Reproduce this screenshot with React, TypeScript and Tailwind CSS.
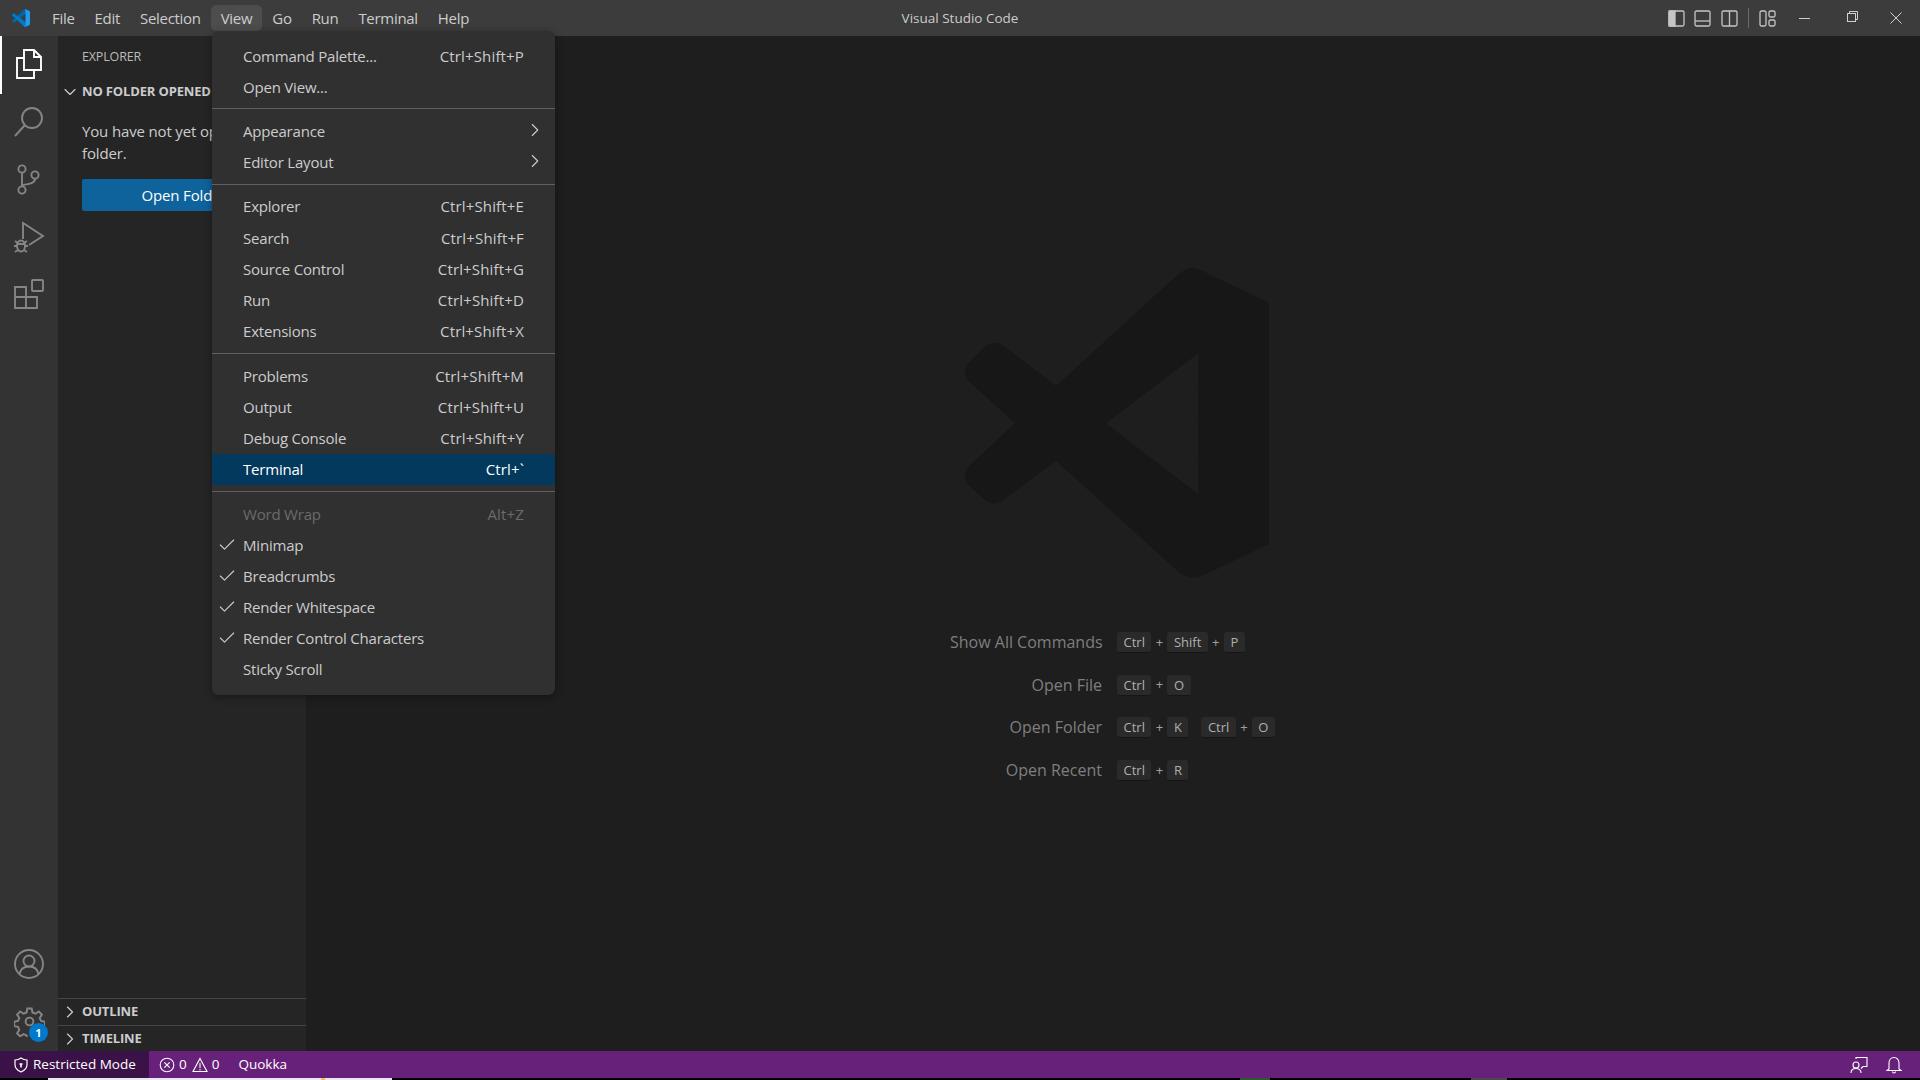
import React from 'react';
import { ChevronDown, ChevronRight, Check } from 'lucide-react';

const FONT = "font-['Open_Sans','Noto_Sans',sans-serif]";

const MENUBAR = ['File', 'Edit', 'Selection', 'View', 'Go', 'Run', 'Terminal', 'Help'];

type Item = { label: string; keys?: string; sub?: boolean; checked?: boolean; disabled?: boolean; active?: boolean };

const MENU: Item[][] = [
  [{ label: 'Command Palette...', keys: 'Ctrl+Shift+P' }, { label: 'Open View...' }],
  [{ label: 'Appearance', sub: true }, { label: 'Editor Layout', sub: true }],
  [
    { label: 'Explorer', keys: 'Ctrl+Shift+E' },
    { label: 'Search', keys: 'Ctrl+Shift+F' },
    { label: 'Source Control', keys: 'Ctrl+Shift+G' },
    { label: 'Run', keys: 'Ctrl+Shift+D' },
    { label: 'Extensions', keys: 'Ctrl+Shift+X' },
  ],
  [
    { label: 'Problems', keys: 'Ctrl+Shift+M' },
    { label: 'Output', keys: 'Ctrl+Shift+U' },
    { label: 'Debug Console', keys: 'Ctrl+Shift+Y' },
    { label: 'Terminal', keys: 'Ctrl+`', active: true },
  ],
  [
    { label: 'Word Wrap', keys: 'Alt+Z', disabled: true },
    { label: 'Minimap', checked: true },
    { label: 'Breadcrumbs', checked: true },
    { label: 'Render Whitespace', checked: true },
    { label: 'Render Control Characters', checked: true },
    { label: 'Sticky Scroll' },
  ],
];

const HINTS: { label: string; chords: string[][] }[] = [
  { label: 'Show All Commands', chords: [['Ctrl', 'Shift', 'P']] },
  { label: 'Open File', chords: [['Ctrl', 'O']] },
  { label: 'Open Folder', chords: [['Ctrl', 'K'], ['Ctrl', 'O']] },
  { label: 'Open Recent', chords: [['Ctrl', 'R']] },
];

function VsLogo() {
  return (
    <svg viewBox="0 0 100 100" className="w-[18px] h-[18px]">
      <path fill="#0065a9" d="M96.46 10.8 75.86.87a6.22 6.22 0 0 0-7.1 1.2L1.35 63.6a4.16 4.16 0 0 0 0 6.16l5.5 5a4.16 4.16 0 0 0 5.32.24L93.4 13.37c2.73-2.07 6.64-.13 6.64 3.3v-.24a6.25 6.25 0 0 0-3.54-5.63z" />
      <path fill="#007acc" d="m96.46 89.2-20.6 9.93a6.22 6.22 0 0 1-7.1-1.2L1.35 36.4a4.16 4.16 0 0 1 0-6.16l5.5-5a4.16 4.16 0 0 1 5.32-.24L93.4 86.63c2.73 2.07 6.64.13 6.64-3.3v.24a6.25 6.25 0 0 1-3.54 5.63z" />
      <path fill="#1f9cf0" d="M75.86 99.13a6.22 6.22 0 0 1-7.1-1.2c2.3 2.3 6.24.67 6.24-2.59V4.66c0-3.26-3.94-4.9-6.24-2.59a6.22 6.22 0 0 1 7.1-1.2L96.46 10.8A6.25 6.25 0 0 1 100 16.43v67.14a6.25 6.25 0 0 1-3.54 5.63z" />
    </svg>
  );
}

function Watermark() {
  return (
    <svg viewBox="9 0 1080 1080" className="w-[360px] h-[360px]">
      <path
        fill="#171717"
        fillRule="evenodd"
        d="M1017 188V912L815 1008Q785 1022 750 1000L378 662L220 780Q192 802 165 780L115 735Q94 707 115 680L255 550L115 422Q94 395 115 370L165 320Q192 298 222 318L378 438L748 100Q785 72 815 92ZM805 340L527 550L805 762Z"
      />
    </svg>
  );
}

function ActivityIcons() {
  return (
    <div className="flex flex-col items-center">
      <div className="relative w-[58px] h-[58px] flex items-center justify-center pb-[3px] pr-[1px]">
        <div className="absolute left-0 top-0 w-[2px] h-[58px] bg-white" />
        <svg width="29" height="32" viewBox="0 0 29 32" fill="none" stroke="#fff" strokeWidth="1.9">
          <path d="M10 22V2h10l7 7v13z" />
          <path d="M20 2v7h7" />
          <path d="M10 10H3v20h17v-8" />
        </svg>
      </div>
      <div className="w-[58px] h-[58px] flex items-center justify-center pb-[3px]">
        <svg width="32" height="32" viewBox="0 0 32 32" fill="none" stroke="#858585" strokeWidth="1.9">
          <circle cx="19" cy="12" r="10" />
          <path d="M12 19 2 30" />
        </svg>
      </div>
      <div className="w-[58px] h-[58px] flex items-center justify-center pb-[3px]">
        <svg width="28" height="32" viewBox="0 0 28 32" fill="none" stroke="#858585" strokeWidth="1.9">
          <circle cx="7" cy="5" r="3.6" />
          <circle cx="7" cy="26" r="3.6" />
          <circle cx="20" cy="11" r="3.6" />
          <path d="M7 9v13" />
          <path d="M20 15c0 4-5 5-13 6" />
        </svg>
      </div>
      <div className="w-[58px] h-[58px] flex items-center justify-center pb-[3px]">
        <svg width="32" height="34" viewBox="0 0 32 34" fill="none" stroke="#858585" strokeWidth="1.9">
          <path d="M10 18V2l20 13-14 9" />
          <ellipse cx="8" cy="25" rx="4" ry="5.5" fill="#333333" />
          <path d="M2 20l3 2M14 20l-3 2M1 25h3M12 25h3M2 31l3-2M14 31l-3-2M4 23h8" />
        </svg>
      </div>
      <div className="w-[58px] h-[58px] flex items-center justify-center pb-[5px]">
        <svg width="31" height="31" viewBox="0 0 31 31" fill="none" stroke="#858585" strokeWidth="1.9">
          <path d="M1 8h11v21H1zM1 18h22v11H12" />
          <rect x="18" y="1" width="11" height="11" rx="1" />
        </svg>
      </div>
    </div>
  );
}

function Kbd({ children }: { children: string }) {
  return (
    <span className="h-[21px] min-w-[21px] px-[6.5px] rounded-[3px] bg-[#2a2a2a] border-b border-[#161616] text-[13px] leading-[21px] text-[#b0b0b0] text-center">
      {children}
    </span>
  );
}

function MenuRow({ item }: { item: Item }) {
  return (
    <div className={`relative h-[31.05px] flex items-center pl-[31px] pr-[31px] justify-between ${item.active ? 'bg-[#04395e] text-white' : item.disabled ? 'text-[#6b6b6b]' : 'text-[#cccccc]'}`}>
      {item.checked && <Check size={20} strokeWidth={1.3} className="absolute left-[5px] top-[5px]" />}
      <span className="tracking-[-0.2px]">{item.label}</span>
      {item.keys && <span className="tracking-[0.15px]">{item.keys}</span>}
      {item.sub && <ChevronRight size={22} strokeWidth={1.2} className="absolute right-[9px] top-[3px]" />}
    </div>
  );
}

export default function App() {
  return (
    <div className={`w-[1920px] h-[1080px] flex flex-col overflow-hidden bg-black relative ${FONT}`}>
      {/* Title bar */}
      <div className="h-[36px] bg-[#3c3c3c] flex items-center relative shrink-0 text-[15px] text-[#cccccc]">
        <div className="w-[42px] flex justify-center"><VsLogo /></div>
        <div className="flex items-center tracking-[-0.3px]">
          {MENUBAR.map((m) => (
            <div key={m} className={`h-[26px] leading-[26px] px-[10px] rounded-[5px] ${m === 'View' ? 'bg-[#4d4d4d]' : ''}`}>{m}</div>
          ))}
        </div>
        <div className="absolute left-0 right-0 text-center text-[13.5px] pointer-events-none">Visual Studio Code</div>
        <div className="ml-auto flex items-center">
          <svg width="17" height="17" viewBox="0 0 17 17" fill="none" stroke="#c5c5c5" strokeWidth="1.3" className="mr-[9px]">
            <rect x="1" y="1" width="15" height="15" rx="1.5" />
            <rect x="1" y="1" width="6" height="15" fill="#c5c5c5" />
          </svg>
          <svg width="17" height="17" viewBox="0 0 17 17" fill="none" stroke="#c5c5c5" strokeWidth="1.3" className="mr-[10px]">
            <rect x="1" y="1" width="15" height="15" rx="1.5" />
            <path d="M1 11h15" />
          </svg>
          <svg width="17" height="17" viewBox="0 0 17 17" fill="none" stroke="#c5c5c5" strokeWidth="1.3">
            <rect x="1" y="1" width="15" height="15" rx="1.5" />
            <path d="M8.5 1v15" />
          </svg>
          <div className="w-px h-[20px] bg-[#6a6a6a] mx-[10px]" />
          <svg width="17" height="17" viewBox="0 0 17 17" fill="none" stroke="#c5c5c5" strokeWidth="1.3">
            <rect x="1" y="1" width="6" height="15" rx="1.5" />
            <rect x="10" y="1" width="6" height="6" rx="1.5" />
            <rect x="10" y="10" width="6" height="6" rx="1.5" />
          </svg>
          <div className="w-[46px] flex justify-center ml-[5px]">
            <svg width="11" height="11" viewBox="0 0 11 11" stroke="#d0d0d0" strokeWidth="1"><path d="M0 5.5h11" /></svg>
          </div>
          <div className="w-[46px] flex justify-center pl-[5px]">
            <svg width="11" height="11" viewBox="0 0 11 11" fill="none" stroke="#d0d0d0" strokeWidth="1" className="mb-[4px]">
              <rect x="0.5" y="2.5" width="8" height="8" />
              <path d="M2.5 2.5V.5h8v8h-2" />
            </svg>
          </div>
          <div className="w-[46px] flex justify-center mr-[1px]">
            <svg width="12" height="12" viewBox="0 0 12 12" stroke="#d0d0d0" strokeWidth="1"><path d="M.5.5l11 11M11.5.5l-11 11" /></svg>
          </div>
        </div>
      </div>

      {/* Main */}
      <div className="h-[1015px] flex shrink-0">
        <div className="w-[58px] bg-[#333333] flex flex-col justify-between shrink-0">
          <ActivityIcons />
          <div className="flex flex-col items-center">
            <div className="w-[58px] h-[58px] flex items-center justify-center">
              <svg width="30" height="30" viewBox="0 0 30 30" fill="none" stroke="#858585" strokeWidth="1.9">
                <circle cx="15" cy="15" r="14" />
                <circle cx="15" cy="12" r="5.5" />
                <path d="M5.5 25c1-5 5-7.5 9.5-7.5s8.500 2.500 9.500 7.500" />
              </svg>
            </div>
            <div className="relative w-[58px] h-[58px] flex items-center justify-center pb-[2px]">
              <svg width="31" height="31" viewBox="0 0 24 24" fill="none" stroke="#858585" strokeWidth="1.5">
                <circle cx="12" cy="12" r="3" />
                <path d="M10.300 2h3.400l.6 3 2.300 1 2.600-1.700 2.400 2.400-1.700 2.600 1 2.300 3 .6v3.400l-3 .6-1 2.300 1.700 2.600-2.400 2.400-2.600-1.700-2.300 1-.6 3h-3.400l-.6-3-2.300-1-2.600 1.700-2.400-2.400 1.700-2.600-1-2.300-3-.6v-3.400l3-.6 1-2.300-1.700-2.600 2.400-2.400 2.600 1.700 2.300-1z" />
              </svg>
              <div className="absolute left-[29px] top-[30px] w-[19px] h-[19px] rounded-full bg-[#007acc] text-white text-[11px] font-bold leading-[19px] text-center">1</div>
            </div>
          </div>
        </div>

        {/* Sidebar */}
        <div className="w-[248px] bg-[#252526] flex flex-col shrink-0 text-[#cccccc] tracking-[-0.15px]">
          <div className="h-[43px] pl-[24px] pt-[12px] text-[12.5px] leading-[18px] text-[#bbbbbb]">EXPLORER</div>
          <div className="h-[26px] flex items-center pl-[2px] text-[13px] font-bold">
            <ChevronDown size={20} strokeWidth={1.4} className="shrink-0" />
            <span className="whitespace-nowrap ml-[2px]">NO FOLDER OPENED</span>
          </div>
          <div className="pl-[24px] pr-[20px] pt-[15px] text-[15px] leading-[22px]">You have not yet opened a folder.</div>
          <div className="mx-[24px] mr-[20px] mt-[15px] h-[32px] rounded-[2px] bg-[#0e639c] text-white text-[15px] leading-[32px] text-center">Open Folder</div>
          <div className="mt-auto">
            <div className="h-[27px] flex items-center pl-[2px] border-t border-[#454545] text-[13px] font-bold">
              <ChevronRight size={20} strokeWidth={1.4} />
              <span className="ml-[2px]">OUTLINE</span>
            </div>
            <div className="h-[26px] flex items-center pl-[2px] border-t border-[#454545] text-[13px] font-bold">
              <ChevronRight size={20} strokeWidth={1.4} />
              <span className="ml-[2px]">TIMELINE</span>
            </div>
          </div>
        </div>

        {/* Editor */}
        <div className="flex-1 bg-[#1e1e1e] flex flex-col items-center pt-[204px]">
          <Watermark />
          <div className="mt-[32px] w-[326px] flex flex-col gap-[21.600px]">
            {HINTS.map((h) => (
              <div key={h.label} className="flex items-center h-[21px]">
                <div className="w-[152px] text-right text-[16px] text-[#7f7f7f] whitespace-nowrap shrink-0 pb-[1px]">{h.label}</div>
                <div className="ml-[15px] flex items-center gap-[13px]">
                  {h.chords.map((c, i) => (
                    <div key={i} className="flex items-center">
                      {c.map((k, j) => (
                        <React.Fragment key={j}>
                          {j > 0 && <span className="w-[16px] text-center text-[13px] text-[#a0a0a0]">+</span>}
                          <Kbd>{k}</Kbd>
                        </React.Fragment>
                      ))}
                    </div>
                  ))}
                </div>
              </div>
            ))}
          </div>
        </div>
      </div>

      {/* Status bar */}
      <div className="h-[27px] bg-[#68217a] flex items-center text-white text-[13.500px] shrink-0">
        <div className="w-[149px] h-full bg-[#3b1247] flex items-center pl-[13px]">
          <svg width="16" height="16" viewBox="0 0 16 16" fill="none" stroke="#fff" strokeWidth="1.2">
            <path d="M8 1c2 1.500 3.500 2 6 2v4.500c0 3.500-2.500 6-6 7.500-3.500-1.500-6-4-6-7.500V3c2.500 0 4-.5 6-2z" />
            <path d="M8 6.500v4M6.500 7h3" strokeWidth="1.600" />
          </svg>
          <span className="ml-[4px] whitespace-nowrap">Restricted Mode</span>
        </div>
        <div className="flex items-center ml-[10px]">
          <svg width="16" height="16" viewBox="0 0 16 16" fill="none" stroke="#fff" strokeWidth="1.1">
            <circle cx="8" cy="8" r="6.800" />
            <path d="M5.300 5.300l5.400 5.400M10.700 5.300l-5.400 5.400" />
          </svg>
          <span className="ml-[4px]">0</span>
          <svg width="16" height="16" viewBox="0 0 16 16" fill="none" stroke="#fff" strokeWidth="1.1" className="ml-[5px]">
            <path d="M8 1.500l7 13H1z" />
            <path d="M8 6v5M8 12v1.200" />
          </svg>
          <span className="ml-[4px]">0</span>
        </div>
        <span className="ml-[19px]">Quokka</span>
        <div className="ml-auto flex items-center">
          <svg width="18" height="18" viewBox="0 0 18 18" fill="none" stroke="#fff" strokeWidth="1.100">
            <circle cx="6" cy="9" r="3" />
            <path d="M1 17c0-3 2-4.500 5-4.500s5 1.500 5 4.500M6 3V1.500h11v9h-4l-2 2" />
          </svg>
          <svg width="16" height="18" viewBox="0 0 16 18" fill="none" stroke="#fff" strokeWidth="1.100" className="ml-[18px] mr-[18px]">
            <path d="M3 13V7c0-3 2-5.500 5-5.500S13 4 13 7v6l2 1.500H1zM6.500 15.500c0 1 .7 1.500 1.500 1.500s1.500-.5 1.500-1.500" />
          </svg>
        </div>
      </div>

      {/* Windows behind, just visible under the status bar */}
      <div className="h-[2px] flex">
        <div className="ml-[48px] w-[273px] bg-[#e8e8ee]" />
        <div className="w-[4px] bg-[#f0c060]" />
        <div className="w-[67px] bg-[#e8e8ee]" />
        <div className="ml-[848px] w-[30px] bg-[#2d5a2d]" />
        <div className="ml-[201px] w-[36px] bg-[#4a4a4a]" />
      </div>

      {/* Open View menu */}
      <div className="absolute left-[212px] top-[31px] w-[343px] h-[664px] rounded-[7px] bg-[#303031] text-[15px] shadow-[0_2px_8px_rgba(0,0,0,0.36)] pt-[10px]">
        {MENU.map((group, i) => (
          <div key={i}>
            {i > 0 && (
              <div className={`flex items-center ${i > 2 ? 'h-[14px]' : i === 1 ? 'h-[13px] pb-[2px]' : 'h-[13px]'}`}>
                <div className="w-full h-px bg-[#606060]" />
              </div>
            )}
            {group.map((it) => <MenuRow key={it.label} item={it} />)}
          </div>
        ))}
      </div>
    </div>
  );
}
